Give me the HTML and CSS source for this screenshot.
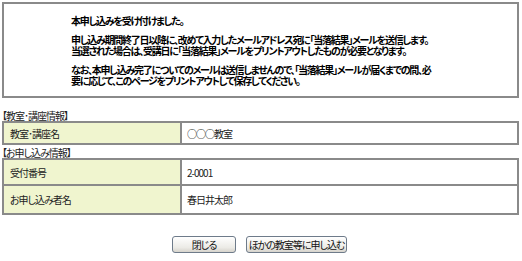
FILE: index.html
```html
<!DOCTYPE html>
<html lang="ja">
<head>
<meta charset="utf-8">
<title>申し込み完了</title>
<link rel="stylesheet" href="styles.css">
</head>
<body>
<div class="page">
  <div class="notice">
    <p>本申し込みを受け付けました。</p>
    <p>申し込み期間終了日以降に、改めて入力したメールアドレス宛に「当落結果」メールを送信します。<br>当選された場合は、受講日に「当落結果」メールをプリントアウトしたものが必要となります。</p>
    <p>なお、本申し込み完了についてのメールは送信しませんので、「当落結果」メールが届くまでの間、必<br>要に応じて、このページをプリントアウトして保存してください。</p>
  </div>

  <div class="section-title first">【教室･講座情報】</div>
  <table class="info">
    <tr class="row-a"><th>教室･講座名</th><td>○○○教室</td></tr>
  </table>

  <div class="section-title">【お申し込み情報】</div>
  <table class="info">
    <tr class="row-b"><th>受付番号</th><td>2-0001</td></tr>
    <tr class="row-c"><th>お申し込み者名</th><td>春日井太郎</td></tr>
  </table>

  <div class="buttons">
    <button class="btn btn-close" type="button">閉じる</button>
    <button class="btn btn-other" type="button">ほかの教室等に申し込む</button>
  </div>
</div>
</body>
</html>
```

FILE: styles.css
```css
html, body {
  margin: 0;
  padding: 0;
  background: #ffffff;
}
body {
  font-family: "Noto Sans CJK JP", "Noto Sans", sans-serif;
  font-size: 10px;
  color: #111;
  font-feature-settings: "palt";
  letter-spacing: -1px;
}
.page {
  padding: 2px 3px 0 2px;
}
.notice {
  border: 2px solid #8a8a8a;
  box-sizing: border-box;
  height: 96px;
  padding: 11px 0 0 67px;
}
.notice p {
  margin: 0 0 8px 0;
  font-weight: bold;
  line-height: 11px;
  letter-spacing: -1.25px;
  color: #000;
}
.section-title {
  margin-top: 3px;
  line-height: 10px;
  height: 10px;
  margin-bottom: 0;
  color: #222;
}
.section-title.first {
  margin-top: 13px;
}
.info {
  width: 100%;
  border-collapse: collapse;
  border: 2px solid #8a8a8a;
}
.info th, .info td {
  border: 2px solid #8a8a8a;
  padding: 0 0 0 6px;
  text-align: left;
  font-weight: normal;
  font-size: 10px;
  color: #222;
}
.row-a th, .row-a td { height: 20px; }
.row-b th, .row-b td { height: 24px; }
.row-c th, .row-c td { height: 27px; }
.info th {
  width: 170px;
  background: #f0f5cf;
}
.info td {
  padding-left: 5px;
}
.buttons {
  display: flex;
  justify-content: center;
  gap: 10px;
  margin-top: 21px;
  padding-right: 2px;
}
.btn {
  height: 17px;
  border: 1px solid #6e7b8a;
  border-radius: 3px;
  background: linear-gradient(#ffffff, #ecebe6 70%, #d6d3cc);
  font-family: inherit;
  font-size: 10px;
  font-feature-settings: "palt";
  letter-spacing: -1px;
  color: #111;
  padding: 0;
}
.btn-close { width: 64px; }
.btn-other { width: 101px; }
```
